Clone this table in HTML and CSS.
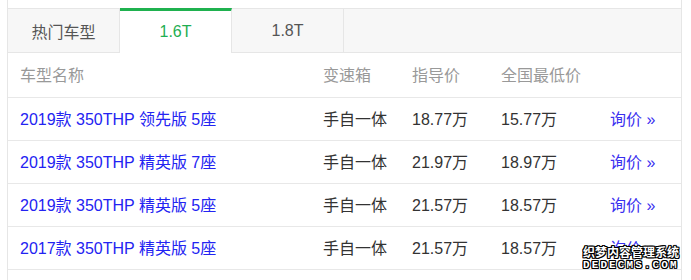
FILE: index.html
```html
<!DOCTYPE html>
<html lang="zh-CN">
<head>
<meta charset="utf-8">
<title>车型报价</title>
<link rel="stylesheet" href="styles.css">
</head>
<body>
<div class="box">
  <div class="tabs">
    <div class="tab">热门车型</div>
    <div class="tab active">1.6T</div>
    <div class="tab">1.8T</div>
  </div>
  <div class="table">
    <div class="row head">
      <div>车型名称</div><div>变速箱</div><div>指导价</div><div>全国最低价</div><div></div>
    </div>
    <div class="row">
      <a class="name">2019款 350THP 领先版 5座</a><div>手自一体</div><div>18.77万</div><div>15.77万</div><a class="ask">询价 »</a>
    </div>
    <div class="row">
      <a class="name">2019款 350THP 精英版 7座</a><div>手自一体</div><div>21.97万</div><div>18.97万</div><a class="ask">询价 »</a>
    </div>
    <div class="row">
      <a class="name">2019款 350THP 精英版 5座</a><div>手自一体</div><div>21.57万</div><div>18.57万</div><a class="ask">询价 »</a>
    </div>
    <div class="row">
      <a class="name">2017款 350THP 精英版 5座</a><div>手自一体</div><div>21.57万</div><div>18.57万</div><a class="ask">询价 »</a>
    </div>
  </div>
</div>
<div class="watermark">
  <div class="wm-cn">织梦内容管理系统</div>
  <div class="wm-en">DEDECMS.COM</div>
</div>
</body>
</html>
```
FILE: styles.css
```css
html, body {
  margin: 0;
  padding: 0;
  background: #fff;
  height: 280px;
  overflow: hidden;
}
body {
  position: relative;
  font-family: "Liberation Sans", "Noto Sans CJK SC", sans-serif;
  font-size: 16px;
  color: #333;
}
.box {
  margin-left: 7px;
  width: 673px;
  border-left: 1px solid #e6e6e6;
  border-right: 1px solid #e6e6e6;
  padding-top: 8px;
  height: 272px;
}
.tabs {
  display: flex;
  background: #f7f7f7;
  border-top: 1px solid #e6e6e6;
  border-bottom: 1px solid #e6e6e6;
  height: 43px;
}
.tab {
  width: 112px;
  border-right: 1px solid #e6e6e6;
  display: flex;
  align-items: center;
  justify-content: center;
  color: #555;
  padding-top: 1px;
  box-sizing: border-box;
}
.tab.active {
  width: 112px;
  background: #fff;
  color: #1fae52;
  border-top: 3px solid #1fb14f;
  margin-top: -1px;
  height: 45px;
  padding-top: 0;
  margin-bottom: -1px;
}
.row {
  display: grid;
  grid-template-columns: 303px 89px 89px 109px 1fr;
  padding-left: 12px;
  padding-bottom: 2px;
  height: 40px;
  align-items: center;
  border-bottom: 1px solid #e8e8e8;
}
.row.head {
  height: 42px;
  color: #999;
}
.name, .ask {
  color: #2323f2;
  text-decoration: none;
  white-space: nowrap;
}
.ask {
  color: #3a2ff0;
}
.watermark {
  position: absolute;
  left: 583px;
  top: 246px;
  color: #fff;
  text-shadow: 1px 0 0 #000, -1px 0 0 #000, 0 1px 0 #000, 0 -1px 0 #000,
    1px 1px 0 #000, -1px -1px 0 #000, 1px -1px 0 #000, -1px 1px 0 #000;
  line-height: 1;
}
.wm-cn {
  font-family: "Noto Sans CJK SC", sans-serif;
  font-weight: bold;
  font-size: 12px;
  height: 13px;
}
.wm-en {
  font-family: "Liberation Mono", monospace;
  font-weight: bold;
  font-size: 11px;
  letter-spacing: 2.1px;
  margin-top: 1px;
}
```
